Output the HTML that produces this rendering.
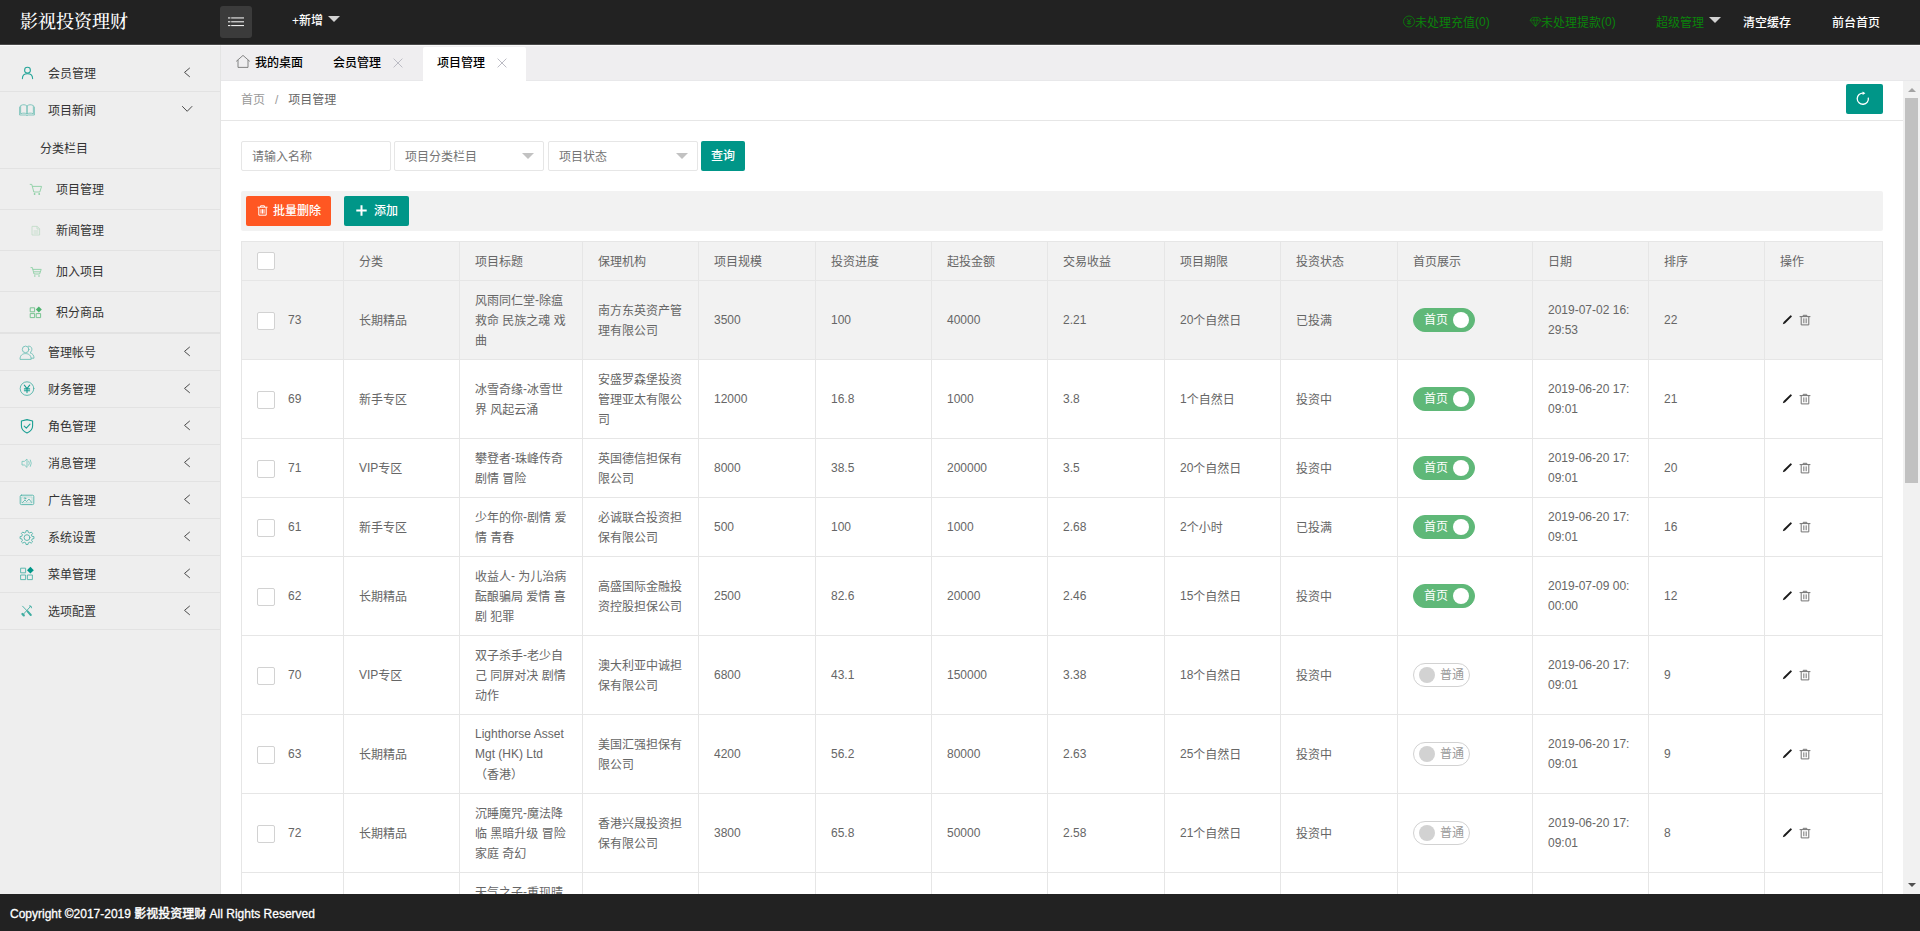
<!DOCTYPE html>
<html lang="zh-CN">
<head>
<meta charset="utf-8">
<title>影视投资理财</title>
<style>
*{box-sizing:border-box;margin:0;padding:0}
html,body{width:1920px;height:931px;overflow:hidden;background:#fff}
body{font-family:"Liberation Sans","Noto Sans CJK SC",sans-serif;font-size:12px;color:#333;position:relative}
ul{list-style:none}
svg{display:block}
/* header */
#hd{position:absolute;left:0;top:0;width:1920px;height:45px;background:#222;border-bottom:1px solid #4a4a4a}
#logo{position:absolute;left:20px;top:1px;height:45px;line-height:42px;color:#fff;font-size:18px;font-weight:500;font-family:"Liberation Serif","Noto Serif CJK SC",serif;white-space:nowrap}
#burger{position:absolute;left:220px;top:6px;width:32px;height:32px;background:#3b3b3b;border-radius:3px}
#burger svg{position:absolute;left:8px;top:11px}
.hl{position:absolute;top:0;height:45px;line-height:42px;white-space:nowrap;color:#fff;font-size:12px;font-weight:500}
.hl.g{font-weight:400}
.hl.g{color:#0a840a}
.hl.r{top:2px}
.u{position:relative;top:-1px}
.hl svg{position:absolute;left:0;top:13px}
.tri{position:absolute;width:0;height:0;border-left:6px solid transparent;border-right:6px solid transparent;border-top:6px solid #d2d2d2}
/* sidebar */
#side{position:absolute;left:0;top:45px;width:221px;height:849px;background:#eee;border-right:1px solid #e4e4e4;border-top:1px solid #fafafa;padding-top:9px}
#side li.m{border-bottom:1px solid #e2e2e2;position:relative}
#side .a{height:36px;line-height:38px;position:relative;padding-left:48px;color:#333;white-space:nowrap}
#side .a svg.ic{position:absolute;left:19px;top:10px;overflow:visible}
#side .a svg.ar{position:absolute;left:179px;top:10.6px}
#side .sub .s{height:41px;line-height:42px;border-bottom:1px solid #e2e2e2;padding-left:56px;position:relative;white-space:nowrap}
#side .sub .s.first{padding-left:40px}
#side .sub .s svg{position:absolute;left:29px;top:13px;overflow:visible}
/* tabs */
#tabs{position:absolute;left:221px;top:45px;width:1699px;height:36px;background:#efeef0;border-top:1px solid #fafafa;border-bottom:1px solid #e8e8ea}
.tab{position:absolute;top:0;height:34px;line-height:34px;white-space:nowrap;color:#000;font-weight:500}
.tab.act{background:#fff;top:1px;height:34px;line-height:32px;border-radius:2px 2px 0 0}
.tab svg{position:absolute}
/* main */
#main{position:absolute;left:221px;top:81px;width:1682px;height:813px;background:#fff;overflow:hidden}
#crumb{position:absolute;left:0;top:0;width:1682px;height:40px;border-bottom:1px solid #e6e6e6;line-height:39px;padding-left:20px;color:#999;white-space:nowrap}
#crumb b{font-weight:normal;color:#666}
#crumb span{margin:0 10px 0 10px;color:#999}
#refresh{position:absolute;left:1625px;top:3px;width:37px;height:30px;background:#009688;border-radius:2px}
#refresh svg{position:absolute;left:10.3px;top:7.4px}
.inp{position:absolute;top:60px;height:30px;border:1px solid #e6e6e6;border-radius:2px;background:#fff;line-height:30px;padding-left:10px;color:#757575;white-space:nowrap}
.inp .dd{position:absolute;right:9px;top:11px;width:0;height:0;border-left:6px solid transparent;border-right:6px solid transparent;border-top:6px solid #c2c2c2}
.btn{position:absolute;height:30px;line-height:31px;color:#fff;font-weight:500;border-radius:2px;white-space:nowrap}
.btn svg{position:absolute}
#tool{position:absolute;left:20px;top:110px;width:1642px;height:40px;background:#f2f2f2;border-radius:2px}
/* table */
table{position:absolute;left:20px;top:160px;width:1641px;border-collapse:collapse;table-layout:fixed;color:#666}
td,th{border:1px solid #e6e6e6;padding:9px 15px;line-height:20px;font-size:12px;font-weight:normal;text-align:left;vertical-align:middle;word-break:break-all;overflow:hidden}
th{padding:10px 15px 8px}
.k{position:relative;top:1px}
thead tr,tr.hov{background:#f2f2f2}
.cb{display:inline-block;width:18px;height:18px;border:1px solid #d2d2d2;border-radius:2px;background:#fff;vertical-align:middle;margin-right:13px;position:relative;top:1px}
th .cb{top:-2px}
.id{vertical-align:middle;position:relative;top:0}
.sw{position:relative;top:0;width:62px;height:24px;border-radius:12px;background:#5FB878;border:1px solid #5FB878;color:#fff;margin-top:0}
.sw em{font-style:normal;position:absolute;left:10px;top:1px;line-height:21px;font-size:12px}
.sw i{position:absolute;left:39px;top:3px;width:16px;height:16px;border-radius:8px;background:#fff}
.sw:not(.on){width:57px;background:#fff;border-color:#d2d2d2;color:#999}
.sw:not(.on) i{left:5px;background:#d2d2d2}
.sw:not(.on) em{left:26px}
td.op{position:relative}
td.op svg{position:absolute;top:50%}
td.op svg.pen{left:17px;margin-top:-6px}
td.op svg.bin{left:34px;margin-top:-6px}
/* scrollbar */
#sb{position:absolute;left:1903px;top:81px;width:17px;height:813px;background:#f1f1f1}
#sb .th{position:absolute;left:2px;top:17px;width:13px;height:385px;background:#c1c1c1}
#sb .up{position:absolute;left:4.5px;top:7px;width:0;height:0;border-left:4px solid transparent;border-right:4px solid transparent;border-bottom:4px solid #a3a3a3}
#sb .dn{position:absolute;left:4.5px;top:802px;width:0;height:0;border-left:4px solid transparent;border-right:4px solid transparent;border-top:4px solid #505050}
/* footer */
#ft{position:absolute;left:0;top:894px;width:1920px;height:37px;background:#222;color:#fff;line-height:40px;padding-left:10px;white-space:nowrap;font-size:12px;font-weight:500;-webkit-text-stroke:0.3px #fff}
</style>
</head>
<body>
<div id="hd">
  <div id="logo">影视投资理财</div>
  <div id="burger"><svg width="16" height="10" viewBox="0 0 16 10"><path d="M0 0.95h2.4M3.2 0.95H16M0 4.8h2.4M3.2 4.8H16M0 8.6h2.4M3.2 8.6H16" stroke="#fff" stroke-width="1" fill="none"/></svg></div>
  <div class="hl" style="left:292px">+新增</div><div class="tri" style="left:328px;top:16px"></div>
  <div class="hl g r" style="left:1402px;padding-left:13px"><svg width="13" height="13" viewBox="0 0 13 13" fill="none" stroke="#0a840a"><circle cx="7" cy="6.5" r="5.5" stroke-width="0.8"/><path d="M4.9 3.6L7 6.4L9.1 3.6M7 6.4V9.8M4.9 6.8H9.1M4.9 8.4H9.1" stroke-width="0.8"/></svg>未处理充值<span class="u">(0)</span></div>
  <div class="hl g r" style="left:1529px;padding-left:12px"><svg width="13" height="13" viewBox="0 0 13 13" fill="none" stroke="#0a840a" stroke-linejoin="round"><path d="M3.4 2.4H9.6L12 5.2L6.5 11.6L1 5.2ZM1 5.2H12M4.6 5.2L6.5 11M8.4 5.2L6.5 11M4.6 5.2L5.4 2.6M8.4 5.2L7.6 2.6" stroke-width="0.7"/></svg>未处理提款<span class="u">(0)</span></div>
  <div class="hl g r" style="left:1656px">超级管理</div><div class="tri" style="left:1709px;top:17px"></div>
  <div class="hl r" style="left:1743px">清空缓存</div>
  <div class="hl r" style="left:1832px">前台首页</div>
</div>
<div id="side">
<ul>
  <li class="m"><div class="a"><svg class="ic" width="16" height="16" viewBox="0 0 16 16" fill="none" stroke-linecap="round" stroke-linejoin="round" ><circle cx="8.5" cy="5.2" r="2.9" stroke="#27a69a" stroke-width="1.1"/><path d="M3.4 13.6C3.4 10.4 5.6 8.8 8.5 8.8C11.4 8.8 13.6 10.4 13.6 13.6" stroke="#27a69a" stroke-width="1.1"/></svg>会员管理<svg class="ar" width="16" height="16" viewBox="0 0 16 16"><path d="M10.8 1.9L5.5 6.4L10.8 10.9" fill="none" stroke="#4a4a4a" stroke-width="1"/></svg></div></li>
  <li class="m"><div class="a"><svg class="ic" width="16" height="16" viewBox="0 0 16 16" fill="none" stroke-linecap="round" stroke-linejoin="round" ><path d="M2 3.4C4 2.3 6.3 2.5 8 4V12C6.3 10.9 4 10.8 2 11.6ZM14 3.4C12 2.3 9.7 2.5 8 4V12C9.7 10.9 12 10.8 14 11.6ZM0.6 5V13H6.8L8 13.6L9.2 13H15.4V5" stroke="#6abdb3" stroke-width="0.8"/></svg>项目新闻<svg class="ar" width="16" height="16" viewBox="0 0 16 16"><path d="M3.2 3.2L8.2 8.3L13.2 3.2" fill="none" stroke="#4a4a4a" stroke-width="1"/></svg></div>
    <div class="sub">
      <div class="s first">分类栏目</div>
      <div class="s"><svg width="14" height="14" viewBox="0 0 14 14" fill="none" stroke-linecap="round" stroke-linejoin="round"><path d="M1.2 2.4H2.8L4.8 10H10.8L12.6 4.4H3.6" stroke="#8ccfa4" stroke-width="0.9"/><circle cx="5.6" cy="12" r="0.9" fill="#8ccfa4"/><circle cx="10.2" cy="12" r="0.9" fill="#8ccfa4"/></svg>项目管理</div>
      <div class="s"><svg width="14" height="14" viewBox="0 0 14 14" fill="none" stroke-linecap="round" stroke-linejoin="round"><path d="M3.4 3.4H8.2L10.6 5.8V12H3.4ZM8 3.6V6H10.4M5 8H9M5 10H9" stroke="#c3ddc9" stroke-width="0.9"/></svg>新闻管理</div>
      <div class="s"><svg width="14" height="14" viewBox="0 0 14 14" fill="none" stroke-linecap="round" stroke-linejoin="round"><path d="M2 3.6H3.4L5 10H10.6L12.2 5.4H4M5.4 7.8H11" stroke="#8ccfa4" stroke-width="0.9"/><circle cx="5.8" cy="12" r="0.8" fill="#8ccfa4"/><circle cx="10" cy="12" r="0.8" fill="#8ccfa4"/></svg>加入项目</div>
      <div class="s"><svg width="14" height="14" viewBox="0 0 14 14" fill="none" stroke-linecap="round" stroke-linejoin="round"><rect x="1.6" y="2.8" width="4" height="4" stroke="#6cc088" stroke-width="0.9"/><rect x="1.6" y="8.6" width="4" height="4" stroke="#6cc088" stroke-width="0.9"/><rect x="7.6" y="8.6" width="4" height="4" stroke="#6cc088" stroke-width="0.9"/><path d="M9.8 1.6L12.8 4.6L9.8 7.6L6.8 4.6Z" fill="#4db36f"/></svg>积分商品</div>
    </div>
  </li>
  <li class="m"><div class="a"><svg class="ic" width="16" height="16" viewBox="0 0 16 16" fill="none" stroke-linecap="round" stroke-linejoin="round" ><circle cx="6.6" cy="5.4" r="3.3" stroke="#6fc0b6" stroke-width="0.9"/><path d="M1 15C1 11.3 3.5 9.6 6.6 9.6C9.7 9.6 12.2 11.3 12.2 15ZM9.3 2.2C11.8 1.6 13.6 4.2 12.6 6.7C12.3 7.6 11.7 8.3 11 8.8C13.6 9.4 15 11.3 15 14.2H12.3" stroke="#6fc0b6" stroke-width="0.9"/></svg>管理帐号<svg class="ar" width="16" height="16" viewBox="0 0 16 16"><path d="M10.8 1.9L5.5 6.4L10.8 10.9" fill="none" stroke="#4a4a4a" stroke-width="1"/></svg></div></li>
  <li class="m"><div class="a"><svg class="ic" width="16" height="16" viewBox="0 0 16 16" fill="none" stroke-linecap="round" stroke-linejoin="round" ><circle cx="8" cy="7.6" r="6.8" stroke="#4fb3a8" stroke-width="0.9"/><path d="M5.3 4.2L8 7.6L10.7 4.2M8 7.6V11.6M5.4 7.9H10.6M5.4 9.8H10.6" stroke="#1a9f93" stroke-width="1.1"/></svg>财务管理<svg class="ar" width="16" height="16" viewBox="0 0 16 16"><path d="M10.8 1.9L5.5 6.4L10.8 10.9" fill="none" stroke="#4a4a4a" stroke-width="1"/></svg></div></li>
  <li class="m"><div class="a"><svg class="ic" width="16" height="16" viewBox="0 0 16 16" fill="none" stroke-linecap="round" stroke-linejoin="round" ><path d="M8 1.6L13.6 3V8C13.6 11 11.2 13.6 8 15C4.8 13.6 2.4 11 2.4 8V3Z" stroke="#1a9f93" stroke-width="1.1"/><path d="M5.2 8.2L7.3 10.2L11 6.2" stroke="#1a9f93" stroke-width="1.1"/></svg>角色管理<svg class="ar" width="16" height="16" viewBox="0 0 16 16"><path d="M10.8 1.9L5.5 6.4L10.8 10.9" fill="none" stroke="#4a4a4a" stroke-width="1"/></svg></div></li>
  <li class="m"><div class="a"><svg class="ic" width="16" height="16" viewBox="0 0 16 16" fill="none" stroke-linecap="round" stroke-linejoin="round" ><path d="M3.4 6.4H5.4L8 4V12.4L5.4 10H3.4ZM9.8 6.2Q11 8.2 9.8 10.2M11.4 5Q13.3 8.2 11.4 11.4" stroke="#7cc7bd" stroke-width="0.9"/></svg>消息管理<svg class="ar" width="16" height="16" viewBox="0 0 16 16"><path d="M10.8 1.9L5.5 6.4L10.8 10.9" fill="none" stroke="#4a4a4a" stroke-width="1"/></svg></div></li>
  <li class="m"><div class="a"><svg class="ic" width="16" height="16" viewBox="0 0 16 16" fill="none" stroke-linecap="round" stroke-linejoin="round" ><rect x="1.2" y="3.2" width="13.6" height="9.4" rx="1.2" stroke="#4fb3a8" stroke-width="0.9"/><rect x="3" y="5" width="10" height="5.8" stroke="#9ad3cb" stroke-width="0.6"/><path d="M3.4 10.6L6 8L7.6 9.6L10 7L12.6 10.4" stroke="#4fb3a8" stroke-width="0.8"/><circle cx="6" cy="6.4" r="0.8" stroke="#4fb3a8" stroke-width="0.7"/></svg>广告管理<svg class="ar" width="16" height="16" viewBox="0 0 16 16"><path d="M10.8 1.9L5.5 6.4L10.8 10.9" fill="none" stroke="#4a4a4a" stroke-width="1"/></svg></div></li>
  <li class="m"><div class="a"><svg class="ic" width="16" height="16" viewBox="0 0 16 16" fill="none" stroke-linecap="round" stroke-linejoin="round" ><path transform="translate(0,0.6)" d="M13.25 6.74 L14.93 7.01 L14.93 8.99 L13.25 9.26 L12.60 10.82 L13.60 12.20 L12.20 13.60 L10.82 12.60 L9.26 13.25 L8.99 14.93 L7.01 14.93 L6.74 13.25 L5.18 12.60 L3.80 13.60 L2.40 12.20 L3.40 10.82 L2.75 9.26 L1.07 8.99 L1.07 7.01 L2.75 6.74 L3.40 5.18 L2.40 3.80 L3.80 2.40 L5.18 3.40 L6.74 2.75 L7.01 1.07 L8.99 1.07 L9.26 2.75 L10.82 3.40 L12.20 2.40 L13.60 3.80 L12.60 5.18Z" stroke="#4fb3a8" stroke-width="0.9"/><circle cx="8" cy="8.6" r="2.9" stroke="#4fb3a8" stroke-width="0.9"/></svg>系统设置<svg class="ar" width="16" height="16" viewBox="0 0 16 16"><path d="M10.8 1.9L5.5 6.4L10.8 10.9" fill="none" stroke="#4a4a4a" stroke-width="1"/></svg></div></li>
  <li class="m"><div class="a"><svg class="ic" width="16" height="16" viewBox="0 0 16 16" fill="none" stroke-linecap="round" stroke-linejoin="round" ><rect x="2" y="2.2" width="4.6" height="4.6" stroke="#4fb3a8" stroke-width="0.9"/><rect x="2" y="9" width="4.6" height="4.6" stroke="#4fb3a8" stroke-width="0.9"/><rect x="8.8" y="9" width="4.6" height="4.6" stroke="#4fb3a8" stroke-width="0.9"/><path d="M11.4 0.8L14.8 4.2L11.4 7.6L8 4.2Z" fill="#009688" stroke="none"/></svg>菜单管理<svg class="ar" width="16" height="16" viewBox="0 0 16 16"><path d="M10.8 1.9L5.5 6.4L10.8 10.9" fill="none" stroke="#4a4a4a" stroke-width="1"/></svg></div></li>
  <li class="m"><div class="a"><svg class="ic" width="16" height="16" viewBox="0 0 16 16" fill="none" stroke-linecap="round" stroke-linejoin="round" ><path d="M3.6 3.2L8 7.8M11.6 3.4L4.6 11" stroke="#3fada1" stroke-width="0.9"/><path d="M8.6 8.4L11.8 12" stroke="#3fada1" stroke-width="2"/><path d="M3.4 11L4.8 12.4" stroke="#3fada1" stroke-width="2.2"/><path d="M10.4 2.8Q12.8 2.2 12.6 4.8" stroke="#3fada1" stroke-width="0.9"/></svg>选项配置<svg class="ar" width="16" height="16" viewBox="0 0 16 16"><path d="M10.8 1.9L5.5 6.4L10.8 10.9" fill="none" stroke="#4a4a4a" stroke-width="1"/></svg></div></li>
</ul>
</div>
<div id="tabs">
  <div class="tab" style="left:34px"><svg width="16" height="15" viewBox="0 0 16 15" style="left:-20px;top:8px"><path d="M1.2 7.4L8 1.4L14.8 7.4M3 6V13.4H13V6" fill="none" stroke="#777" stroke-width="0.9"/></svg>我的桌面</div>
  <div class="tab" style="left:112px">会员管理<svg width="10" height="10" viewBox="0 0 10 10" style="left:60px;top:11.5px"><path d="M0.6 0.6L9.4 9.4M9.4 0.6L0.6 9.4" stroke="#bcbcc4" stroke-width="1" fill="none"/></svg></div>
  <div class="tab act" style="left:202px;width:103px;padding-left:14px">项目管理<svg width="10" height="10" viewBox="0 0 10 10" style="left:74px;top:10.5px"><path d="M0.6 0.6L9.4 9.4M9.4 0.6L0.6 9.4" stroke="#bcbcc4" stroke-width="1" fill="none"/></svg></div>
</div>
<div id="main">
  <div id="crumb">首页<span>/</span><b>项目管理</b></div>
  <div id="refresh"><svg width="16" height="16" viewBox="0 0 16 16"><path d="M12.3 6.6A5.6 5.6 0 1 1 7.4 2.1" fill="none" stroke="#fff" stroke-width="1.3"/><path d="M6.6 0.4L9.4 2.2L6.6 4Z" fill="#fff"/></svg></div>
  <div class="inp" style="left:20px;width:150px">请输入名称</div>
  <div class="inp" style="left:173px;width:150px">项目分类栏目<i class="dd"></i></div>
  <div class="inp" style="left:327px;width:150px">项目状态<i class="dd"></i></div>
  <div class="btn" style="left:480px;top:60px;width:44px;background:#009688;padding-left:10px">查询</div>
  <div id="tool"></div>
  <div class="btn" style="left:25px;top:115px;width:85px;background:#FF5722;padding-left:27px"><svg width="11" height="11" viewBox="0 0 11 11" style="left:11px;top:9.4px"><path d="M0.5 2.2H10.5M3.6 2V0.8H7.4V2M1.8 2.4V10.2H9.2V2.4M4 4.2V8.6M5.5 4.2V8.6M7 4.2V8.6" fill="none" stroke="#fff" stroke-width="1"/></svg>批量删除</div>
  <div class="btn" style="left:123px;top:115px;width:65px;background:#009688;padding-left:30px"><svg width="11" height="11" viewBox="0 0 11 11" style="left:12px;top:9.4px"><path d="M5.5 0.3V10.7M0.3 5.5H10.7" stroke="#fff" stroke-width="2" fill="none"/></svg>添加</div>
  <table>
    <colgroup><col style="width:102px"><col style="width:116px"><col style="width:123px"><col style="width:116px"><col style="width:117px"><col style="width:116px"><col style="width:116px"><col style="width:117px"><col style="width:116px"><col style="width:117px"><col style="width:135px"><col style="width:116px"><col style="width:116px"><col style="width:118px"></colgroup>
    <thead><tr><th><span class="cb"></span></th><th>分类</th><th>项目标题</th><th>保理机构</th><th>项目规模</th><th>投资进度</th><th>起投金额</th><th>交易收益</th><th>项目期限</th><th>投资状态</th><th>首页展示</th><th>日期</th><th>排序</th><th>操作</th></tr></thead>
    <tbody>
<tr class="hov"><td class="n"><span class="cb"></span><span class="id">73</span></td><td><span class="k">长期精品</span></td><td><span class="k">风雨同仁堂</span>-<span class="k">除瘟</span><br><span class="k">救命</span> <span class="k">民族之魂</span> <span class="k">戏</span><br><span class="k">曲</span></td><td><span class="k">南方东英资产管</span><br><span class="k">理有限公司</span></td><td>3500</td><td>100</td><td>40000</td><td>2.21</td><td>20<span class="k">个自然日</span></td><td><span class="k">已投满</span></td><td><div class="sw on"><em>首页</em><i></i></div></td><td>2019-07-02 16:<br>29:53</td><td>22</td><td class="op"><svg class="pen" width="11" height="11" viewBox="0 0 11 11"><path d="M0.8 10.2L1.6 8.1L8.3 1.4Q8.7 1 9.1 1.4L9.7 2Q10.1 2.4 9.7 2.8L3 9.5Z" fill="#1a1a1a"/></svg><svg class="bin" width="12" height="12" viewBox="0 0 12 12"><path d="M0.6 2.6H11.4M4.2 2.4V1.3H7.8V2.4M2.2 2.8V10.9H9.8V2.8" fill="none" stroke="#737373" stroke-width="1"/><path d="M4.5 4.4V9.2M6 4.4V9.2M7.5 4.4V9.2" fill="none" stroke="#8a8a8a" stroke-width="0.8"/></svg></td></tr>
<tr><td class="n"><span class="cb"></span><span class="id">69</span></td><td><span class="k">新手专区</span></td><td><span class="k">冰雪奇缘</span>-<span class="k">冰雪世</span><br><span class="k">界</span> <span class="k">风起云涌</span></td><td><span class="k">安盛罗森堡投资</span><br><span class="k">管理亚太有限公</span><br><span class="k">司</span></td><td>12000</td><td>16.8</td><td>1000</td><td>3.8</td><td>1<span class="k">个自然日</span></td><td><span class="k">投资中</span></td><td><div class="sw on"><em>首页</em><i></i></div></td><td>2019-06-20 17:<br>09:01</td><td>21</td><td class="op"><svg class="pen" width="11" height="11" viewBox="0 0 11 11"><path d="M0.8 10.2L1.6 8.1L8.3 1.4Q8.7 1 9.1 1.4L9.7 2Q10.1 2.4 9.7 2.8L3 9.5Z" fill="#1a1a1a"/></svg><svg class="bin" width="12" height="12" viewBox="0 0 12 12"><path d="M0.6 2.6H11.4M4.2 2.4V1.3H7.8V2.4M2.2 2.8V10.9H9.8V2.8" fill="none" stroke="#737373" stroke-width="1"/><path d="M4.5 4.4V9.2M6 4.4V9.2M7.5 4.4V9.2" fill="none" stroke="#8a8a8a" stroke-width="0.8"/></svg></td></tr>
<tr><td class="n"><span class="cb"></span><span class="id">71</span></td><td>VIP<span class="k">专区</span></td><td><span class="k">攀登者</span>-<span class="k">珠峰传奇</span><br><span class="k">剧情</span> <span class="k">冒险</span></td><td><span class="k">英国德信担保有</span><br><span class="k">限公司</span></td><td>8000</td><td>38.5</td><td>200000</td><td>3.5</td><td>20<span class="k">个自然日</span></td><td><span class="k">投资中</span></td><td><div class="sw on"><em>首页</em><i></i></div></td><td>2019-06-20 17:<br>09:01</td><td>20</td><td class="op"><svg class="pen" width="11" height="11" viewBox="0 0 11 11"><path d="M0.8 10.2L1.6 8.1L8.3 1.4Q8.7 1 9.1 1.4L9.7 2Q10.1 2.4 9.7 2.8L3 9.5Z" fill="#1a1a1a"/></svg><svg class="bin" width="12" height="12" viewBox="0 0 12 12"><path d="M0.6 2.6H11.4M4.2 2.4V1.3H7.8V2.4M2.2 2.8V10.9H9.8V2.8" fill="none" stroke="#737373" stroke-width="1"/><path d="M4.5 4.4V9.2M6 4.4V9.2M7.5 4.4V9.2" fill="none" stroke="#8a8a8a" stroke-width="0.8"/></svg></td></tr>
<tr><td class="n"><span class="cb"></span><span class="id">61</span></td><td><span class="k">新手专区</span></td><td><span class="k">少年的你</span>-<span class="k">剧情</span> <span class="k">爱</span><br><span class="k">情</span> <span class="k">青春</span></td><td><span class="k">必诚联合投资担</span><br><span class="k">保有限公司</span></td><td>500</td><td>100</td><td>1000</td><td>2.68</td><td>2<span class="k">个小时</span></td><td><span class="k">已投满</span></td><td><div class="sw on"><em>首页</em><i></i></div></td><td>2019-06-20 17:<br>09:01</td><td>16</td><td class="op"><svg class="pen" width="11" height="11" viewBox="0 0 11 11"><path d="M0.8 10.2L1.6 8.1L8.3 1.4Q8.7 1 9.1 1.4L9.7 2Q10.1 2.4 9.7 2.8L3 9.5Z" fill="#1a1a1a"/></svg><svg class="bin" width="12" height="12" viewBox="0 0 12 12"><path d="M0.6 2.6H11.4M4.2 2.4V1.3H7.8V2.4M2.2 2.8V10.9H9.8V2.8" fill="none" stroke="#737373" stroke-width="1"/><path d="M4.5 4.4V9.2M6 4.4V9.2M7.5 4.4V9.2" fill="none" stroke="#8a8a8a" stroke-width="0.8"/></svg></td></tr>
<tr><td class="n"><span class="cb"></span><span class="id">62</span></td><td><span class="k">长期精品</span></td><td><span class="k">收益人</span>- <span class="k">为儿治病</span><br><span class="k">酝酿骗局</span> <span class="k">爱情</span> <span class="k">喜</span><br><span class="k">剧</span> <span class="k">犯罪</span></td><td><span class="k">高盛国际金融投</span><br><span class="k">资控股担保公司</span></td><td>2500</td><td>82.6</td><td>20000</td><td>2.46</td><td>15<span class="k">个自然日</span></td><td><span class="k">投资中</span></td><td><div class="sw on"><em>首页</em><i></i></div></td><td>2019-07-09 00:<br>00:00</td><td>12</td><td class="op"><svg class="pen" width="11" height="11" viewBox="0 0 11 11"><path d="M0.8 10.2L1.6 8.1L8.3 1.4Q8.7 1 9.1 1.4L9.7 2Q10.1 2.4 9.7 2.8L3 9.5Z" fill="#1a1a1a"/></svg><svg class="bin" width="12" height="12" viewBox="0 0 12 12"><path d="M0.6 2.6H11.4M4.2 2.4V1.3H7.8V2.4M2.2 2.8V10.9H9.8V2.8" fill="none" stroke="#737373" stroke-width="1"/><path d="M4.5 4.4V9.2M6 4.4V9.2M7.5 4.4V9.2" fill="none" stroke="#8a8a8a" stroke-width="0.8"/></svg></td></tr>
<tr><td class="n"><span class="cb"></span><span class="id">70</span></td><td>VIP<span class="k">专区</span></td><td><span class="k">双子杀手</span>-<span class="k">老少自</span><br><span class="k">己</span> <span class="k">同屏对决</span> <span class="k">剧情</span><br><span class="k">动作</span></td><td><span class="k">澳大利亚中诚担</span><br><span class="k">保有限公司</span></td><td>6800</td><td>43.1</td><td>150000</td><td>3.38</td><td>18<span class="k">个自然日</span></td><td><span class="k">投资中</span></td><td><div class="sw"><em>普通</em><i></i></div></td><td>2019-06-20 17:<br>09:01</td><td>9</td><td class="op"><svg class="pen" width="11" height="11" viewBox="0 0 11 11"><path d="M0.8 10.2L1.6 8.1L8.3 1.4Q8.7 1 9.1 1.4L9.7 2Q10.1 2.4 9.7 2.8L3 9.5Z" fill="#1a1a1a"/></svg><svg class="bin" width="12" height="12" viewBox="0 0 12 12"><path d="M0.6 2.6H11.4M4.2 2.4V1.3H7.8V2.4M2.2 2.8V10.9H9.8V2.8" fill="none" stroke="#737373" stroke-width="1"/><path d="M4.5 4.4V9.2M6 4.4V9.2M7.5 4.4V9.2" fill="none" stroke="#8a8a8a" stroke-width="0.8"/></svg></td></tr>
<tr><td class="n"><span class="cb"></span><span class="id">63</span></td><td><span class="k">长期精品</span></td><td>Lighthorse Asset<br>Mgt (HK) Ltd<br><span class="k">（香港）</span></td><td><span class="k">美国汇强担保有</span><br><span class="k">限公司</span></td><td>4200</td><td>56.2</td><td>80000</td><td>2.63</td><td>25<span class="k">个自然日</span></td><td><span class="k">投资中</span></td><td><div class="sw"><em>普通</em><i></i></div></td><td>2019-06-20 17:<br>09:01</td><td>9</td><td class="op"><svg class="pen" width="11" height="11" viewBox="0 0 11 11"><path d="M0.8 10.2L1.6 8.1L8.3 1.4Q8.7 1 9.1 1.4L9.7 2Q10.1 2.4 9.7 2.8L3 9.5Z" fill="#1a1a1a"/></svg><svg class="bin" width="12" height="12" viewBox="0 0 12 12"><path d="M0.6 2.6H11.4M4.2 2.4V1.3H7.8V2.4M2.2 2.8V10.9H9.8V2.8" fill="none" stroke="#737373" stroke-width="1"/><path d="M4.5 4.4V9.2M6 4.4V9.2M7.5 4.4V9.2" fill="none" stroke="#8a8a8a" stroke-width="0.8"/></svg></td></tr>
<tr><td class="n"><span class="cb"></span><span class="id">72</span></td><td><span class="k">长期精品</span></td><td><span class="k">沉睡魔咒</span>-<span class="k">魔法降</span><br><span class="k">临</span> <span class="k">黑暗升级</span> <span class="k">冒险</span><br><span class="k">家庭</span> <span class="k">奇幻</span></td><td><span class="k">香港兴晟投资担</span><br><span class="k">保有限公司</span></td><td>3800</td><td>65.8</td><td>50000</td><td>2.58</td><td>21<span class="k">个自然日</span></td><td><span class="k">投资中</span></td><td><div class="sw"><em>普通</em><i></i></div></td><td>2019-06-20 17:<br>09:01</td><td>8</td><td class="op"><svg class="pen" width="11" height="11" viewBox="0 0 11 11"><path d="M0.8 10.2L1.6 8.1L8.3 1.4Q8.7 1 9.1 1.4L9.7 2Q10.1 2.4 9.7 2.8L3 9.5Z" fill="#1a1a1a"/></svg><svg class="bin" width="12" height="12" viewBox="0 0 12 12"><path d="M0.6 2.6H11.4M4.2 2.4V1.3H7.8V2.4M2.2 2.8V10.9H9.8V2.8" fill="none" stroke="#737373" stroke-width="1"/><path d="M4.5 4.4V9.2M6 4.4V9.2M7.5 4.4V9.2" fill="none" stroke="#8a8a8a" stroke-width="0.8"/></svg></td></tr>
<tr><td class="n"><span class="cb"></span><span class="id">68</span></td><td><span class="k">新手专区</span></td><td><span class="k">天气之子</span>-<span class="k">重现晴</span><br><span class="k">空</span> <span class="k">动画</span><br><span class="k">爱情</span></td><td><span class="k">中国银河投资担</span><br><span class="k">保有限公司</span></td><td>5000</td><td>77.2</td><td>10000</td><td>2.35</td><td>12<span class="k">个自然日</span></td><td><span class="k">投资中</span></td><td><div class="sw"><em>普通</em><i></i></div></td><td>2019-06-20 17:<br>09:01</td><td>7</td><td class="op"><svg class="pen" width="11" height="11" viewBox="0 0 11 11"><path d="M0.8 10.2L1.6 8.1L8.3 1.4Q8.7 1 9.1 1.4L9.7 2Q10.1 2.4 9.7 2.8L3 9.5Z" fill="#1a1a1a"/></svg><svg class="bin" width="12" height="12" viewBox="0 0 12 12"><path d="M0.6 2.6H11.4M4.2 2.4V1.3H7.8V2.4M2.2 2.8V10.9H9.8V2.8" fill="none" stroke="#737373" stroke-width="1"/><path d="M4.5 4.4V9.2M6 4.4V9.2M7.5 4.4V9.2" fill="none" stroke="#8a8a8a" stroke-width="0.8"/></svg></td></tr>
    </tbody>
  </table>
</div>
<div id="sb"><i class="up"></i><div class="th"></div><i class="dn"></i></div>
<div id="ft">Copyright ©2017-2019 影视投资理财 All Rights Reserved</div>
</body>
</html>
